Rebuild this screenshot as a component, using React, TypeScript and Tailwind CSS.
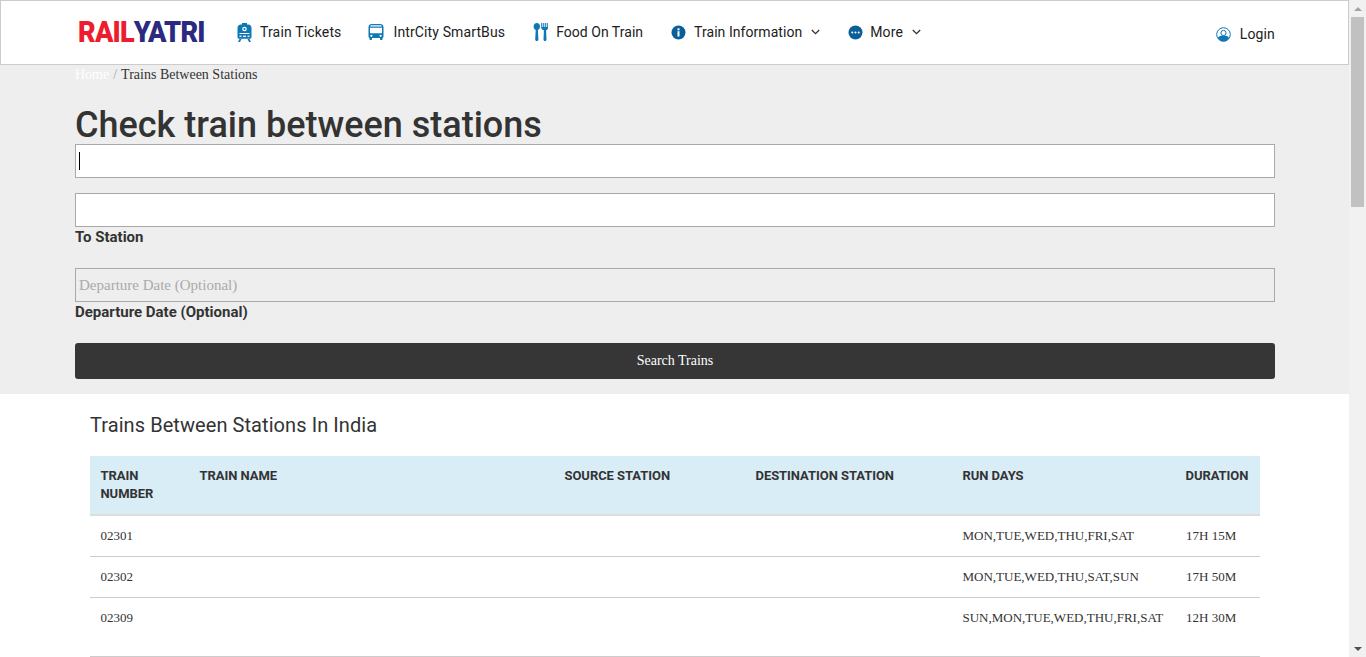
import React from "react";

const roboto = "font-['Roboto',sans-serif]";
const serif = "font-['Liberation_Serif',serif]";

interface TrainRow {
  number: string;
  days: string;
  duration: string;
}

const rows: TrainRow[] = [
  { number: "02301", days: "MON,TUE,WED,THU,FRI,SAT", duration: "17H 15M" },
  { number: "02302", days: "MON,TUE,WED,THU,SAT,SUN", duration: "17H 50M" },
  { number: "02309", days: "SUN,MON,TUE,WED,THU,FRI,SAT", duration: "12H 30M" },
];

const TrainIcon = () => (
  <svg width="15" height="19" viewBox="0 0 15 19" fill="#0f78b4">
    <path d="M5 0h5v1.500h1.300C13 1.500 14.500 3 14.500 4.700V14c0 1-.8 1.800-1.800 1.800H2.300C1.300 15.800.5 15 .5 14V4.700C.5 3 2 1.500 3.700 1.500H5z" />
    <path d="M2.500 16h2L3 19H1zM10.500 16h2l1.500 3h-2z" />
    <circle cx="7.500" cy="6" r="2.300" fill="#fff" />
    <circle cx="7.500" cy="6" r="1.100" />
    <rect x="2.500" y="10" width="10" height="1" fill="#fff" />
    <rect x="2.500" y="12.600" width="2" height="1.300" fill="#fff" />
    <rect x="10.500" y="12.600" width="2" height="1.300" fill="#fff" />
    <rect x="6" y="12.600" width="3" height="1.300" fill="#fff" />
  </svg>
);

const BusIcon = () => (
  <svg width="16" height="16" viewBox="0 0 16 16" fill="#0f78b4">
    <path fillRule="evenodd" d="M4 0h8c2 0 3.500 1.200 3.500 3v9.500c0 .8-.4 1.300-1 1.500v1.300c0 .4-.3.700-.7.700h-1.100c-.4 0-.7-.3-.7-.7V14H4v1.300c0 .4-.3.700-.7.700H2.200c-.4 0-.7-.3-.7-.7V14c-.6-.2-1-.7-1-1.500V3C.5 1.200 2 0 4 0zM4 1.300c-.9 0-1.700.4-2 1.100h12c-.3-.7-1.100-1.100-2-1.100zM2 3.800V8.500c0 .4.300.7.700.7h10.600c.4 0 .7-.3.700-.7V3.800zM3.400 10.700a1.100 1.100 0 1 0 0 2.200 1.100 1.100 0 0 0 0-2.200zm9.200 0a1.100 1.100 0 1 0 0 2.200 1.100 1.100 0 0 0 0-2.200z" />
  </svg>
);

const FoodIcon = () => (
  <svg width="15" height="18" viewBox="0 0 15 18" fill="#0f78b4">
    <path d="M3.800 0C5.700 0 7 1.500 7 3.500 7 5.300 6 6.600 4.900 7L5.400 16.500C5.400 17.400 4.800 18 3.800 18S2.200 17.400 2.200 16.500L2.700 7C1.600 6.600.6 5.300.6 3.500.6 1.500 1.900 0 3.800 0z" />
    <path d="M8.200 0h1.100v4h.9V0h1.100v4h.9V0h1.100v4h.9V0H15v4.800c0 1.300-.9 2.200-1.900 2.500l.4 9.200c0 .9-.6 1.500-1.500 1.500s-1.500-.6-1.500-1.500l.4-9.200C9.900 7 8.200 6.100 8.200 4.800z" />
  </svg>
);

const InfoIcon = () => (
  <svg width="15" height="15" viewBox="0 0 15 15">
    <circle cx="7.500" cy="7.500" r="7" fill="#0b5f98" />
    <rect x="6.500" y="6.200" width="2" height="5.300" fill="#fff" />
    <rect x="6.500" y="3.300" width="2" height="2" fill="#fff" />
  </svg>
);

const MoreIcon = () => (
  <svg width="15" height="15" viewBox="0 0 15 15">
    <circle cx="7.500" cy="7.500" r="7" fill="#0b5f98" />
    <circle cx="4.300" cy="7.500" r="1" fill="#fff" />
    <circle cx="7.500" cy="7.500" r="1" fill="#fff" />
    <circle cx="10.700" cy="7.500" r="1" fill="#fff" />
  </svg>
);

const UserIcon = () => (
  <svg width="15" height="15" viewBox="0 0 15 15">
    <circle cx="7.500" cy="7.500" r="6.800" fill="#fff" stroke="#0f78b4" strokeWidth="1" />
    <circle cx="7.500" cy="6" r="2.600" fill="#fff" stroke="#0f78b4" strokeWidth="1" />
    <path d="M1.700 11c1-1.700 3-2.500 5.800-2.500s4.800.8 5.800 2.500a6.800 6.800 0 0 1-11.600 0z" fill="#0f78b4" />
  </svg>
);

const Chevron = () => (
  <svg width="9" height="6" viewBox="0 0 9 6" fill="none" stroke="#333" strokeWidth="1.300">
    <path d="M.8 1l3.700 3.700L8.200 1" />
  </svg>
);

const NavItem = ({
  icon,
  label,
  labelClass,
  caret,
}: {
  icon: React.ReactNode;
  label: string;
  labelClass: string;
  caret?: boolean;
}) => (
  <div className="flex items-center">
    <span className="flex w-[16px] justify-center">{icon}</span>
    <span className={`${labelClass} text-[14px] font-normal text-[#212121]`}>{label}</span>
    {caret && (
      <span className="ml-[9px]">
        <Chevron />
      </span>
    )}
  </div>
);

const Header = () => (
  <header className={`${roboto} h-[65px] border border-[#cccccc] bg-white`}>
    <div className="ml-[77px] flex h-[62px] w-[1197px] items-center">
      <div className="flex w-[158px] origin-left scale-x-[.92] text-[29.500px] font-black tracking-[-0.900px]">
        <span className="text-[#ed1c2e]">RAIL</span>
        <span className="text-[#2b2a80]">YATRI</span>
      </div>
      <div className="flex items-center gap-[27px]">
        <NavItem icon={<TrainIcon />} label="Train Tickets" labelClass="ml-[8px] tracking-[0.15px]" />
        <div className="ml-[-1px]">
          <NavItem icon={<BusIcon />} label="IntrCity SmartBus" labelClass="ml-[10px] tracking-[0.12px]" />
        </div>
        <NavItem icon={<FoodIcon />} label="Food On Train" labelClass="ml-[8px] tracking-[0.03px]" />
        <NavItem icon={<InfoIcon />} label="Train Information" labelClass="ml-[8px] tracking-[0.05px]" caret />
        <NavItem icon={<MoreIcon />} label="More" labelClass="ml-[7px] tracking-[0.15px]" caret />
      </div>
      <div className="ml-auto flex items-center pt-[4px]">
        <UserIcon />
        <span className="ml-[9px] text-[14px] tracking-[0.15px] text-[#212121]">Login</span>
      </div>
    </div>
  </header>
);

const SearchForm = () => (
  <section className="h-[329px] bg-[#eeeeee] pl-[75px] pr-[74px]">
    <div className={`${serif} h-[18px] pt-[2px] text-[14px] leading-[16px]`}>
      <span className="text-white">Home</span>
      <span className="mx-[4px] text-[#aaaaaa]">/</span>
      <span className="text-[#333333]">Trains Between Stations</span>
    </div>
    <h1 className={`${roboto} mt-[18px] h-[43px] text-[36px] font-medium leading-[48px] text-[#333333]`}>
      Check train between stations
    </h1>
    <div className="flex h-[34px] items-center border border-[#a9a9a9] bg-white pl-[3px]">
      <span className="h-[18px] w-px bg-black" />
    </div>
    <div className="mt-[15px] h-[34px] border border-[#a9a9a9] bg-white" />
    <label className={`${roboto} mt-[2px] block h-[39px] text-[15px] font-bold leading-[17px] text-[#333333]`}>
      To Station
    </label>
    <div className={`${serif} flex h-[34px] items-center border border-[#a9a9a9] pl-[3px] text-[15px] text-[#aaaaaa]`}>
      Departure Date (Optional)
    </div>
    <label className={`${roboto} mt-[2px] block h-[39px] text-[15px] font-bold leading-[17px] text-[#333333]`}>
      Departure Date (Optional)
    </label>
    <button className={`${serif} block h-[36px] w-full rounded-[3px] bg-[#363636] pb-[2px] text-[14px] text-white`}>
      Search Trains
    </button>
  </section>
);

const TrainTable = () => (
  <section className="h-[263px] bg-white px-[90px]">
    <h2 className={`${roboto} h-[62px] pt-[19px] text-[20px] font-normal leading-[24px] tracking-[0.07px] text-[#333333]`}>
      Trains Between Stations In India
    </h2>
    <div className="w-[1170px]">
      <div className={`${roboto} flex h-[60px] border-b-2 border-[#dddddd] bg-[#d9edf7] pt-[11px] text-[13px] font-bold leading-[18px] tracking-[-0.05px] text-[#333333]`}>
        <div className="w-[109.500px] pl-[10.500px]">
          TRAIN
          <br />
          NUMBER
        </div>
        <div className="w-[365px]">TRAIN NAME</div>
        <div className="w-[191px]">SOURCE STATION</div>
        <div className="w-[207px]">DESTINATION STATION</div>
        <div className="w-[223px]">RUN DAYS</div>
        <div>DURATION</div>
      </div>
      {rows.map((row, index) => (
        <div
          key={row.number}
          className={`${serif} flex h-[41px] items-center pb-[1px] text-[13px] text-[#333333] ${
            index < rows.length - 1 ? "border-b border-[#cccccc]" : ""
          }`}
        >
          <div className="w-[872.500px] pl-[10.500px]">{row.number}</div>
          <div className="w-[223.500px]">{row.days}</div>
          <div>{row.duration}</div>
        </div>
      ))}
      <div className="mt-[17px] border-b border-[#cccccc]" />
    </div>
  </section>
);

const Scrollbar = () => (
  <div className="flex h-[657px] w-[17px] flex-col bg-[#f1f1f1]">
    <div className="flex h-[17px] items-center justify-center">
      <span className="h-0 w-0 border-x-[4px] border-b-[4px] border-x-transparent border-b-[#a3a3a3]" />
    </div>
    <div className="mx-[2px] h-[190px] bg-[#c1c1c1]" />
    <div className="flex-1" />
    <div className="flex h-[17px] items-center justify-center">
      <span className="h-0 w-0 border-x-[4px] border-t-[4px] border-x-transparent border-t-[#505050]" />
    </div>
  </div>
);

export default function App() {
  return (
    <div className="flex h-[657px] w-[1366px] overflow-hidden bg-white">
      <main className="w-[1349px]">
        <Header />
        <SearchForm />
        <TrainTable />
      </main>
      <Scrollbar />
    </div>
  );
}
